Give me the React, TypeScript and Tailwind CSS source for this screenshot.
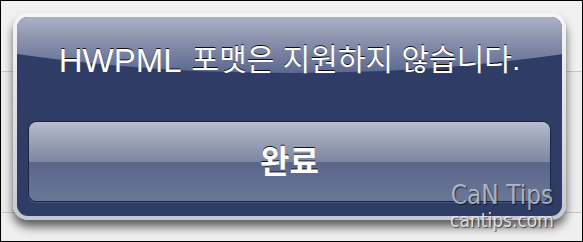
export default function App() {
  return (
    <div className="relative w-[583px] h-[242px] overflow-hidden border border-black bg-[linear-gradient(180deg,#f1f1f1_0px,#f1f1f1_70px,#c9c9c9_70px,#c9c9c9_71px,#ececec_71px,#ececec_211px,#c9c9c9_211px,#c9c9c9_212px,#efefef_212px)] pl-[12px] pt-[12px] font-['Liberation_Sans','Noto_Sans_CJK_KR',sans-serif]">
      {/* alert */}
      <div className="w-[553px] h-[207px] rounded-[15px] p-[4px] bg-[linear-gradient(180deg,#f6f6f8,#c4c8d2)] shadow-[0_7px_10px_rgba(0,0,0,0.6)]">
        <div className="relative h-full rounded-[11px] bg-[#2f3d66] overflow-hidden flex flex-col">
          {/* gloss */}
          <div className="absolute left-1/2 -translate-x-1/2 top-[-424px] w-[1400px] h-[480px] rounded-[50%] bg-[linear-gradient(180deg,#aeb4c7_88%,#8a92ad_93%,#5c6890_100%)]" />
          <div className="relative h-[104px] flex items-center justify-center pb-[18px] text-white text-[30px] [text-shadow:0_-1px_0_rgba(0,0,0,0.9)]">
            <span className="text-[33px] mr-[10px] leading-none">HWPML</span>
            <span className="leading-none">포맷은 지원하지 않습니다.</span>
          </div>
          <div className="relative mx-[11px] h-[81px] rounded-[9px] border border-[#1a2342] overflow-hidden shadow-[0_1px_0_rgba(120,135,175,0.35)]">
            <div className="h-full flex flex-col bg-[#5a678a]">
              <div className="h-1/2 bg-[linear-gradient(180deg,#b9bece,#a5abbe_30%,#7c86a2)]" />
              <div className="h-1/2 bg-[linear-gradient(180deg,#59668a,#6b7797)]" />
            </div>
            <div className="absolute inset-0 flex items-center justify-center text-white text-[32px] font-bold [text-shadow:0_-1px_0_rgba(0,0,0,0.9)]">
              완료
            </div>
          </div>
        </div>
      </div>
      {/* watermark */}
      <div className="absolute left-[443px] top-[181px] w-[116px] flex flex-col items-center leading-none font-['DejaVu_Sans_Condensed','DejaVu_Sans',sans-serif]">
        <span className="text-[26px] text-[rgba(205,212,228,0.75)] [text-shadow:1px_1px_1px_rgba(0,0,0,0.6)]">CaN Tips</span>
        <span className="text-[19px] mt-[3px] text-[rgba(235,238,245,0.9)] [text-shadow:1px_1px_1px_rgba(0,0,0,0.6)]">cantips.com</span>
      </div>
    </div>
  );
}
